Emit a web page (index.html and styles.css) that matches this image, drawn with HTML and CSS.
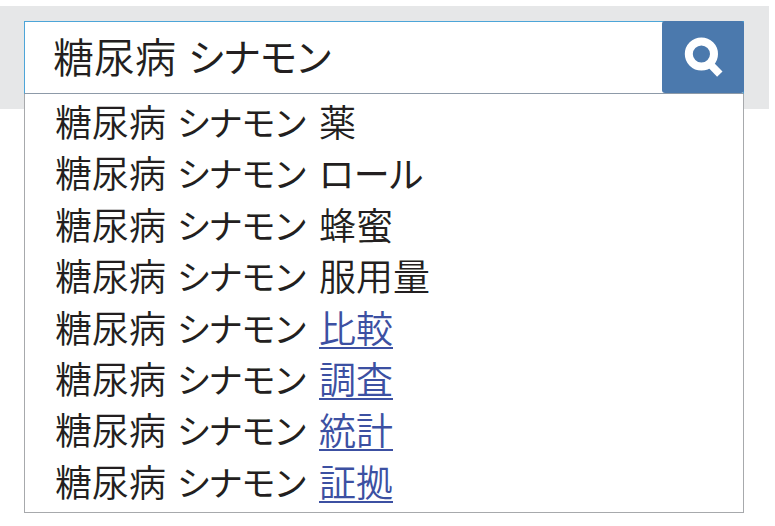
FILE: index.html
```html
<!DOCTYPE html>
<html lang="ja">
<head>
<meta charset="utf-8">
<title>検索</title>
<link rel="stylesheet" href="styles.css">
</head>
<body>
<main class="page">
<form class="search">
<div class="query">糖尿病 <span class="kana">シナモン</span></div>
<button class="submit" type="button" aria-label="検索"><svg viewBox="0 0 82 72" width="82" height="72"><circle cx="39.4" cy="33" r="12.6" fill="none" stroke="#fff" stroke-width="8"/><path d="M47.5 42.5L57.8 53.2" stroke="#fff" stroke-width="7.5"/></svg></button>
</form>
<ul class="suggestions">
<li><span class="base">糖尿病 <span class="kana">シナモン</span></span><span>薬</span></li>
<li><span class="base">糖尿病 <span class="kana">シナモン</span></span><span class="kana-word">ロール</span></li>
<li><span class="base">糖尿病 <span class="kana">シナモン</span></span><span>蜂蜜</span></li>
<li><span class="base">糖尿病 <span class="kana">シナモン</span></span><span>服用量</span></li>
<li><span class="base">糖尿病 <span class="kana">シナモン</span></span><a>比較</a></li>
<li><span class="base">糖尿病 <span class="kana">シナモン</span></span><a>調査</a></li>
<li><span class="base">糖尿病 <span class="kana">シナモン</span></span><a>統計</a></li>
<li><span class="base">糖尿病 <span class="kana">シナモン</span></span><a>証拠</a></li>
</ul>
</main>
</body>
</html>
```
FILE: styles.css
```css
* { box-sizing: border-box; }
body { margin: 0; background: #fff; color: #231f20; font-family: "Noto Sans CJK JP", sans-serif; font-weight: 350; }
.page { width: 769px; height: 526px; padding: 21px 25px 0 24px; background: linear-gradient(#fff 6px, #e6e7e8 6px, #e6e7e8 109px, #fff 109px); }
.search { display: flex; height: 73px; width: 720px; margin: 0; border: 1px solid #4da5d8; border-bottom-color: #8d9aa8; background: #fff; }
.query { flex: 1; padding-left: 28px; font-size: 41px; line-height: 66px; white-space: pre; }
.kana { font-feature-settings: "palt"; font-size: 0.937em; font-weight: 400; line-height: 1; margin-left: 0.08em; vertical-align: 1px; }
.kana-word { font-feature-settings: "palt"; font-size: 36px; font-weight: 400; }
.submit { width: 82px; height: 72px; margin: -1px -1px 0 0; padding: 0; border: 0; border-radius: 3px; background: #4b79ad; }
.submit svg { display: block; }
.suggestions { list-style: none; margin: 0; padding: 2px 0 0 30px; height: 419px; border: 1px solid #a7a9ac; border-top: 0; background: #fff; font-size: 37px; }
.suggestions li { display: flex; height: 51.4px; line-height: 51.4px; }
.base { width: 264px; flex: none; white-space: pre; }
.suggestions a { height: 47px; line-height: 51.4px; color: #3c50a2; border-bottom: 2px solid #3c50a2; }
```
